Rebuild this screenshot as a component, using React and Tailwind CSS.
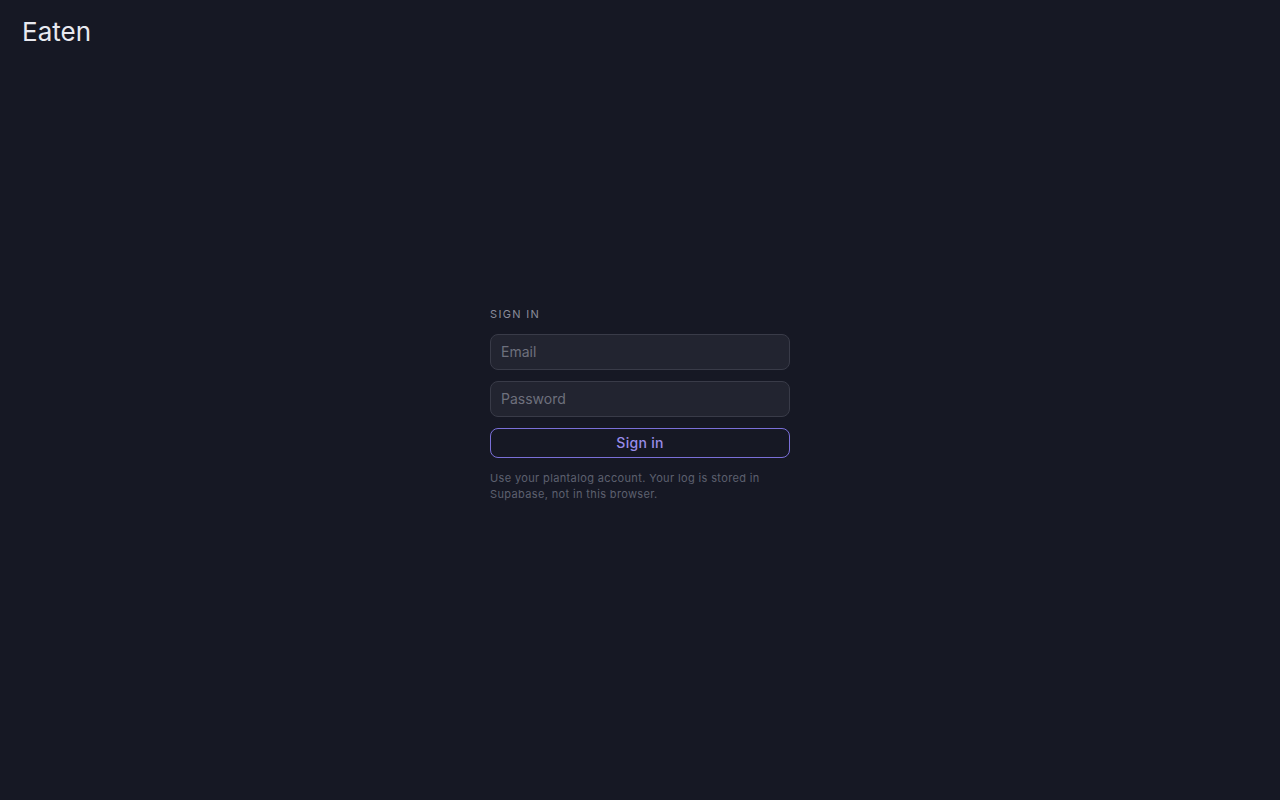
import { useState } from 'react';

export default function App() {
  const [email, setEmail] = useState('');
  const [password, setPassword] = useState('');

  return (
    <div
      className="min-h-screen bg-[#161824] text-[#e6e7ee]"
      style={{ fontFamily: 'Inter, "Noto Sans", sans-serif' }}
    >
      {/* Header */}
      <header className="px-[22px] pt-4">
        <h1 className="text-[26px] leading-8 font-normal text-[#e8e9f0]">Eaten</h1>
      </header>

      {/* Sign in form */}
      <main className="flex justify-center pt-[258px]">
        <form className="w-[300px] flex flex-col" onSubmit={(e) => e.preventDefault()}>
          <p className="text-[11px] leading-4 tracking-[0.12em] uppercase text-[#8a8c9a] mb-3">Sign in</p>
          <input
            type="email"
            value={email}
            onChange={(e) => setEmail(e.target.value)}
            placeholder="Email"
            className="h-9 w-full rounded-lg border border-[#393b48] bg-[#222430] px-[10px] pb-[2px] text-sm text-[#e6e7ee] placeholder:text-[#6e707d] outline-none"
          />
          <input
            type="password"
            value={password}
            onChange={(e) => setPassword(e.target.value)}
            placeholder="Password"
            className="mt-[11px] h-9 w-full rounded-lg border border-[#393b48] bg-[#222430] px-[10px] pb-[2px] text-sm text-[#e6e7ee] placeholder:text-[#6e707d] outline-none"
          />
          <button
            type="submit"
            className="mt-[11px] h-[30px] w-full rounded-lg border border-[#7a6fd8] bg-transparent text-sm font-medium tracking-[0.02em] text-[#998ce8]"
          >
            Sign in
          </button>
          <p className="mt-3 text-[11px] leading-4 tracking-[0.033em] text-[#5d606f]">
            Use your plantalog account. Your log is stored in Supabase, not in this browser.
          </p>
        </form>
      </main>
    </div>
  );
}
